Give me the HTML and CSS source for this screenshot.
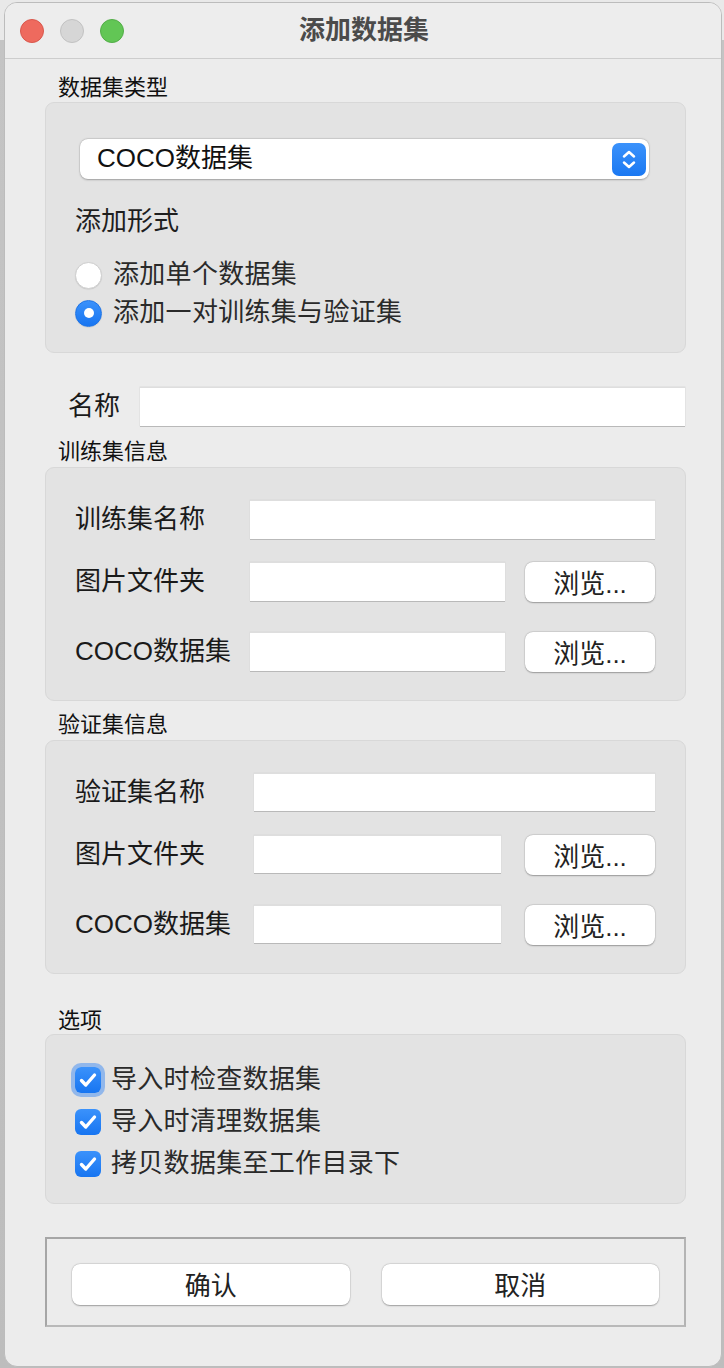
FILE: index.html
```html
<!DOCTYPE html>
<html lang="zh-CN">
<head>
<meta charset="utf-8">
<title>添加数据集</title>
<link rel="stylesheet" href="styles.css">
</head>
<body>
<div class="window">
  <div class="titlebar">
    <div class="lights">
      <span class="light red"></span>
      <span class="light grey"></span>
      <span class="light green"></span>
    </div>
    <div class="title">添加数据集</div>
    <div></div>
  </div>

  <div class="content">
    <div class="section-label">数据集类型</div>
    <div class="group group-type">
      <div class="select">
        <span class="select-text">COCO数据集</span>
        <span class="stepper">
          <svg width="34" height="33" viewBox="0 0 34 33"><path d="M12 13.5 L17 9 L22 13.5 M12 19.5 L17 24 L22 19.5" fill="none" stroke="#fff" stroke-width="2.5" stroke-linecap="round" stroke-linejoin="round"/></svg>
        </span>
      </div>
      <div class="sub-label">添加形式</div>
      <div class="radios">
        <div class="radio-row"><span class="radio"></span><span class="opt-text">添加单个数据集</span></div>
        <div class="radio-row"><span class="radio checked"><span class="dot"></span></span><span class="opt-text">添加一对训练集与验证集</span></div>
      </div>
    </div>

    <div class="name-row">
      <span class="name-label">名称</span>
      <span class="input"></span>
    </div>

    <div class="section-label tight">训练集信息</div>
    <div class="group group-form">
      <div class="form-row r1"><span class="row-label">训练集名称</span><span class="input"></span></div>
      <div class="form-row r2"><span class="row-label">图片文件夹</span><span class="input"></span><span class="btn browse">浏览...</span></div>
      <div class="form-row r3"><span class="row-label">COCO数据集</span><span class="input"></span><span class="btn browse">浏览...</span></div>
    </div>

    <div class="section-label tight val">验证集信息</div>
    <div class="group group-form wide">
      <div class="form-row r1"><span class="row-label">验证集名称</span><span class="input"></span></div>
      <div class="form-row r2"><span class="row-label">图片文件夹</span><span class="input"></span><span class="btn browse">浏览...</span></div>
      <div class="form-row r3"><span class="row-label">COCO数据集</span><span class="input"></span><span class="btn browse">浏览...</span></div>
    </div>

    <div class="section-label opts">选项</div>
    <div class="group group-opts">
      <div class="check-row"><span class="check focus"><svg width="26" height="26" viewBox="0 0 26 26"><path d="M6.5 13.5 L10.8 18 L19.5 8" fill="none" stroke="#fff" stroke-width="3.4" stroke-linecap="round" stroke-linejoin="round"/></svg></span><span class="opt-text">导入时检查数据集</span></div>
      <div class="check-row"><span class="check"><svg width="26" height="26" viewBox="0 0 26 26"><path d="M6.5 13.5 L10.8 18 L19.5 8" fill="none" stroke="#fff" stroke-width="3.4" stroke-linecap="round" stroke-linejoin="round"/></svg></span><span class="opt-text">导入时清理数据集</span></div>
      <div class="check-row"><span class="check"><svg width="26" height="26" viewBox="0 0 26 26"><path d="M6.5 13.5 L10.8 18 L19.5 8" fill="none" stroke="#fff" stroke-width="3.4" stroke-linecap="round" stroke-linejoin="round"/></svg></span><span class="opt-text">拷贝数据集至工作目录下</span></div>
    </div>

    <div class="footer">
      <span class="btn action">确认</span>
      <span class="btn action">取消</span>
    </div>
  </div>
</div>
</body>
</html>
```

FILE: styles.css
```css
* { box-sizing: border-box; }

html, body {
  margin: 0;
  padding: 0;
}

body {
  width: 724px;
  height: 1368px;
  overflow: hidden;
  background: linear-gradient(#e9e9e9 0, #e9e9e9 40px, #c4c4c4 40px, #bdbdbd 100%);
  font-family: "Liberation Sans", "Noto Sans CJK SC", sans-serif;
  color: #1e1e1e;
}

.window {
  margin: 2px 0 0 4px;
  width: 718px;
  height: 1365px;
  border: 1px solid #bcbcbc;
  border-radius: 13px;
  background: #ececec;
  overflow: hidden;
}

.titlebar {
  height: 56px;
  border-bottom: 1px solid #cdcdcd;
  background: #ededed;
  display: grid;
  grid-template-columns: 1fr auto 1fr;
  align-items: center;
}

.lights {
  display: flex;
  gap: 16px;
  padding-left: 15px;
}

.light {
  width: 24px;
  height: 24px;
  border-radius: 50%;
  display: block;
}
.light.red { background: #ee6a5e; border: 1px solid #d9574c; }
.light.grey { background: #d6d6d6; border: 1px solid #c2c2c2; }
.light.green { background: #62c655; border: 1px solid #53ad48; }

.title {
  font-size: 26px;
  font-weight: 700;
  color: #4b4b4b;
  line-height: 30px;
  padding: 0 0 2px 2px;
}

.content {
  padding: 16px 35px 0 40px;
}

.section-label {
  font-size: 22px;
  line-height: 26px;
  height: 26px;
  padding-left: 13px;
  color: #111;
  margin-bottom: 1px;
}
.section-label.tight { margin-top: 13px; margin-bottom: 2px; }
.section-label.val { margin-top: 11px; }
.section-label.opts { margin-top: 34px; margin-bottom: 0; }

.group {
  background: #e3e3e3;
  border: 1px solid #d8d8d8;
  border-radius: 9px;
}

.group-type {
  padding: 36px 36px 20px 29px;
}

.select {
  margin-left: 5px;
  height: 40px;
  background: #fff;
  border-radius: 8px;
  box-shadow: 0 0.5px 2px rgba(0,0,0,0.28), 0 0 0 0.5px rgba(0,0,0,0.08);
  display: flex;
  align-items: center;
  justify-content: space-between;
  padding: 0 3px 0 17px;
}

.select-text {
  font-size: 26px;
  line-height: 30px;
  padding-bottom: 2px;
  color: #111;
}

.stepper {
  width: 34px;
  height: 33px;
  border-radius: 7px;
  background: linear-gradient(#3b92fb, #1a78f2);
  display: flex;
}

.sub-label {
  margin-top: 26px;
  font-size: 26px;
  line-height: 32px;
  padding-bottom: 2px;
  color: #1e1e1e;
}

.radios {
  margin-top: 17px;
}

.radio-row, .check-row {
  display: flex;
  align-items: center;
}
.radio-row { height: 38px; }

.radio {
  width: 27px;
  height: 27px;
  border-radius: 50%;
  background: #fff;
  border: 1px solid #cfcfcf;
  box-shadow: 0 0.5px 1px rgba(0,0,0,0.12);
  margin-right: 11px;
  display: flex;
  align-items: center;
  justify-content: center;
  flex: none;
}
.radio.checked {
  background: linear-gradient(#3a91fb, #1875f1);
  border-color: #1e74e6;
}
.radio .dot {
  width: 10px;
  height: 10px;
  border-radius: 50%;
  background: #fff;
}

.opt-text {
  font-size: 26px;
  line-height: 34px;
  letter-spacing: 0.3px;
  padding-bottom: 3px;
  color: #2a2a2a;
}

.name-row {
  margin-top: 34px;
  display: flex;
  align-items: center;
  height: 39px;
  padding-right: 1px;
}
.name-label {
  width: 95px;
  padding-left: 23px;
  font-size: 26px;
  line-height: 34px;
  padding-bottom: 2px;
  color: #1a1a1a;
}
.name-row .input { flex: 1; height: 39px; }

.input {
  display: block;
  background: #fff;
  border-top: 1px solid #dedede;
  box-shadow: 0 1px 0 #b9b9b9, 0 0 0 0.5px #d9d9d9;
}

.group-form {
  padding: 32px 30px 28px 29px;
}

.form-row {
  display: flex;
  align-items: flex-start;
  height: 40px;
}
.form-row.r2 { margin-top: 22px; }
.form-row.r3 { margin-top: 30px; }

.row-label {
  width: 175px;
  flex: none;
  font-size: 26px;
  line-height: 38px;
  color: #1a1a1a;
}
.wide .row-label { width: 179px; }

.form-row .input {
  flex: 1;
  height: 39px;
}
.wide .form-row .input { height: 38px; }

.btn {
  display: flex;
  align-items: center;
  justify-content: center;
  background: #fff;
  border-radius: 8px;
  box-shadow: 0 0.5px 1.5px rgba(0,0,0,0.3), 0 0 0 0.5px rgba(0,0,0,0.08);
  font-size: 26px;
  padding-bottom: 2px;
  color: #222;
}

.browse {
  width: 130px;
  height: 40px;
  margin-left: 20px;
  flex: none;
}
.wide .browse { margin-left: 24px; }

.group-opts {
  padding: 24px 30px 18px 29px;
}

.check-row { height: 42px; }

.check {
  width: 26px;
  height: 26px;
  border-radius: 6px;
  background: linear-gradient(#3b92fb, #1775f1);
  margin-right: 10px;
  flex: none;
  display: flex;
}
.check.focus {
  box-shadow: 0 0 0 4px rgba(110, 164, 238, 0.7);
}

.footer {
  margin-top: 33px;
  height: 90px;
  border: 2px solid #a6a6a6;
  border-right-color: #b4b4b4;
  border-bottom-color: #b9b9b9;
  display: flex;
  gap: 32px;
  padding: 25px 25px 0 25px;
}

.action {
  flex: 1;
  height: 41px;
}
```
